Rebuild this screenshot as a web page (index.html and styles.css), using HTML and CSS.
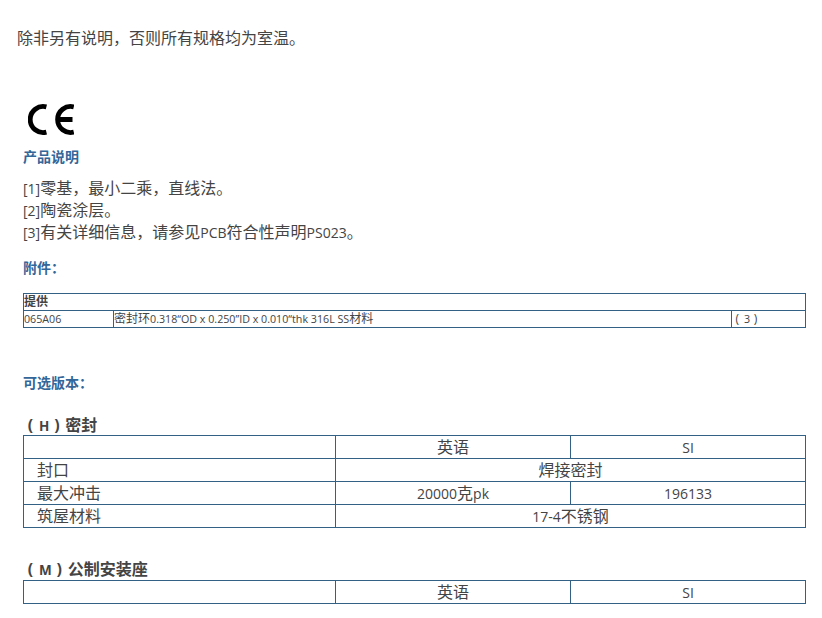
FILE: index.html
```html
<!DOCTYPE html>
<html lang="zh-CN">
<head>
<meta charset="utf-8">
<title>规格</title>
<link rel="stylesheet" href="styles.css">
</head>
<body>
<div class="page">
  <p class="intro">除非另有说明<span class="tc">，</span>否则所有规格均为室温。</p>
  <div class="content">
    <svg class="ce" width="46" height="31" viewBox="0 0 46 31" aria-label="CE">
      <path d="M18.4 2.9A13 13 0 1 0 18.4 28.1" fill="none" stroke="#000" stroke-width="4.8"/>
      <path d="M45.8 2.9A13 13 0 1 0 45.8 28.1M30 15.5H44.5" fill="none" stroke="#000" stroke-width="4.8"/>
    </svg>
    <h3 class="label label-desc">产品说明</h3>
    <div class="notes">
      <div><span class="lat">[1]</span>零基<span class="tc">，</span>最小二乘<span class="tc">，</span>直线法。</div>
      <div><span class="lat">[2]</span>陶瓷涂层。</div>
      <div><span class="lat">[3]</span>有关详细信息<span class="tc">，</span>请参见<span class="lat">PCB</span>符合性声明<span class="lat">PS023</span>。</div>
    </div>
    <h3 class="label label-acc">附件<span class="tc">：</span></h3>
    <table class="tbl small">
      <colgroup><col class="c-a"><col class="c-b"><col class="c-c"></colgroup>
      <tr><th colspan="3">提供</th></tr>
      <tr><td><span class="lat">065A06</span></td><td>密封环<span class="lat">0.318“OD x 0.250”ID x 0.010“thk 316L SS</span>材料</td><td><span class="par">(</span><span class="lat">3</span><span class="par">)</span></td></tr>
    </table>
    <h3 class="label label-opt">可选版本<span class="tc">：</span></h3>
    <h4 class="opt opt-h"><span class="par">(</span><span class="lat">H</span><span class="par">)</span>密封</h4>
    <table class="tbl large">
      <colgroup><col class="c-1"><col class="c-2"><col class="c-3"></colgroup>
      <tr><td></td><td class="mid">英语</td><td class="mid"><span class="lat">SI</span></td></tr>
      <tr><td class="name">封口</td><td class="mid" colspan="2">焊接密封</td></tr>
      <tr><td class="name">最大冲击</td><td class="mid"><span class="lat">20000</span>克<span class="lat">pk</span></td><td class="mid"><span class="lat">196133</span></td></tr>
      <tr><td class="name">筑屋材料</td><td class="mid" colspan="2"><span class="lat">17-4</span>不锈钢</td></tr>
    </table>
    <h4 class="opt opt-m"><span class="par">(</span><span class="lat">M</span><span class="par">)</span>公制安装座</h4>
    <table class="tbl large">
      <colgroup><col class="c-1"><col class="c-2"><col class="c-3"></colgroup>
      <tr><td></td><td class="mid">英语</td><td class="mid"><span class="lat">SI</span></td></tr>
    </table>
  </div>
</div>
</body>
</html>
```
FILE: styles.css
```css
html, body { margin: 0; padding: 0; background: #fff; }
body {
  font-family: "Open Sans", "Noto Sans CJK SC", sans-serif;
  font-size: 16px;
  color: #444;
  overflow: hidden;
}
.page { padding: 27px 0 0 17px; width: 788px; }
.intro { margin: 0; line-height: 22px; }
.content { padding-left: 6px; }
.ce { display: block; margin: 55px 0 0 5px; }
.label { margin: 0; font-size: 14px; line-height: 20px; font-weight: 700; color: #336699; }
.label-desc { margin-top: 12px; }
.notes { margin-top: 10px; line-height: 22px; }
.label-acc { margin-top: 15px; }
.label-opt { margin-top: 45px; }
.opt { margin: 0; font-size: 16px; line-height: 20px; font-weight: 700; color: #444; }
.opt .lat { font-size: 13.5px; }
.opt-h { margin-top: 22px; }
.opt-m { margin-top: 31px; padding-bottom: 1px; }
.lat { font-size: 14px; line-height: 1; }
.tc { font-family: "Noto Sans CJK TC", sans-serif; line-height: 1; }
.par { display: inline-block; width: 1em; padding-left: .3em; box-sizing: border-box; line-height: 1; }
.tbl { border-collapse: collapse; table-layout: fixed; width: 782px; }
.tbl td, .tbl th { border: 1px solid #336085; padding: 0; text-align: left; }
.small { margin-top: 15px; font-size: 12px; }
.small td, .small th { height: 16px; line-height: 16px; }
.small th { font-weight: 700; }
.small .lat { font-size: 10.7px; }
.large td { height: 22px; line-height: 22px; }
.large .mid { text-align: center; }
.large .name { padding-left: 13px; }
.c-a { width: 90px; }
.c-b { width: 618px; }
.c-c { width: 74px; }
.c-1 { width: 312px; }
.c-2 { width: 235px; }
.c-3 { width: 235px; }
```
